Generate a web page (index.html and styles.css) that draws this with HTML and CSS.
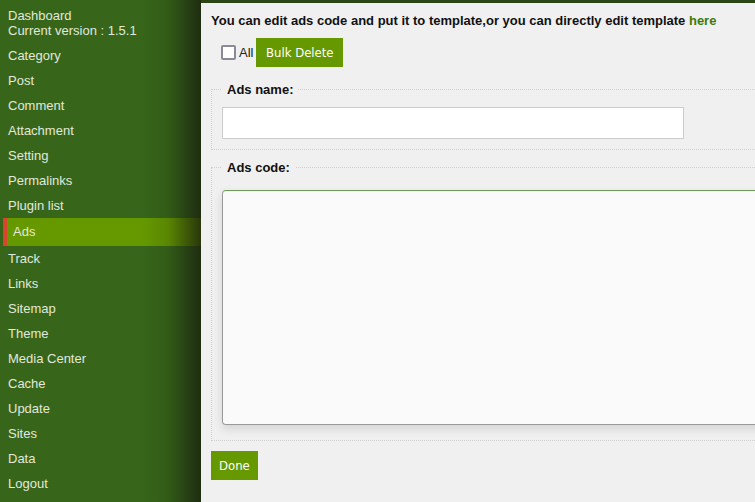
FILE: index.html
```html
<!DOCTYPE html>
<html>
<head>
<meta charset="utf-8">
<link rel="stylesheet" href="styles.css">
</head>
<body>
<div class="layout">
  <aside class="sidebar">
    <div class="head">
      <div>Dashboard</div>
      <div>Current version : 1.5.1</div>
    </div>
    <ul class="menu">
      <li>Category</li>
      <li>Post</li>
      <li>Comment</li>
      <li>Attachment</li>
      <li>Setting</li>
      <li>Permalinks</li>
      <li>Plugin list</li>
      <li class="active">Ads</li>
      <li>Track</li>
      <li>Links</li>
      <li>Sitemap</li>
      <li>Theme</li>
      <li>Media Center</li>
      <li>Cache</li>
      <li>Update</li>
      <li>Sites</li>
      <li>Data</li>
      <li>Logout</li>
    </ul>
  </aside>
  <main class="panel">
    <p class="intro">You can edit ads code and put it to template,or you can directly edit template <a href="#">here</a></p>
    <div class="bulk">
      <label class="all"><span class="box"></span>All</label>
      <button class="btn btn-bulk">Bulk Delete</button>
    </div>
    <fieldset class="fs fs-name">
      <legend>Ads name:</legend>
      <input class="name-input" type="text">
    </fieldset>
    <fieldset class="fs fs-code">
      <legend>Ads code:</legend>
      <textarea class="code"></textarea>
    </fieldset>
    <button class="btn btn-done">Done</button>
  </main>
</div>
</body>
</html>
```
FILE: styles.css
```css
html, body {
  margin: 0;
  padding: 0;
}
body {
  background: #2c4515;
  font-family: "Liberation Sans", Arial, sans-serif;
  font-size: 13px;
  width: 755px;
  height: 502px;
  overflow: hidden;
}
.layout {
  display: flex;
  height: 502px;
  overflow: hidden;
}
.sidebar {
  position: relative;
  flex: 0 0 201px;
  background: #37661a;
  color: #e2e8dc;
  padding-top: 8px;
  box-sizing: border-box;
}
.sidebar::after {
  content: "";
  position: absolute;
  top: 0;
  right: 0;
  bottom: 0;
  width: 60px;
  background: linear-gradient(to right, rgba(20,30,10,0) 0%, rgba(20,30,10,0.15) 45%, rgba(25,30,15,0.8) 100%);
  pointer-events: none;
}
.head {
  padding-left: 8px;
  line-height: 15px;
}
.menu {
  list-style: none;
  margin: 5px 0 0;
  padding: 0;
}
.menu li {
  height: 25px;
  line-height: 25px;
  padding-left: 8px;
}
.menu li.active {
  height: 28px;
  line-height: 28px;
  margin-left: 3px;
  border-left: 4px solid #d9442c;
  padding-left: 6px;
  background: #669900;
}
.panel {
  flex: 0 0 640px;
  margin-top: 3px;
  background: #f0f0f0;
  padding: 10px 0 0 10px;
  box-sizing: border-box;
  color: #111;
}
.intro {
  margin: 0;
  font-weight: bold;
  line-height: 15px;
}
.intro a {
  color: #3d7a0c;
  text-decoration: none;
}
.bulk {
  display: flex;
  align-items: center;
  margin-top: 10px;
  padding-left: 10px;
  height: 29px;
}
.all {
  display: flex;
  align-items: center;
  color: #222;
  margin-right: 3px;
}
.box {
  width: 11px;
  height: 11px;
  border: 2px solid #8a8a98;
  border-radius: 2px;
  background: #fff;
  margin-right: 3px;
}
.btn {
  border: 0;
  background: #669900;
  color: #fff;
  font-family: "DejaVu Sans Condensed", "DejaVu Sans", sans-serif;
  font-size: 13px;
  height: 29px;
  padding: 0 8px;
}
.btn-bulk {
  padding: 0 9.5px;
}
.fs {
  width: 600px;
  margin: 0;
  border: 1px dotted #cfcfcf;
  padding: 0 10px;
  box-sizing: border-box;
}
.fs legend {
  font-weight: bold;
  padding: 0 5px;
  line-height: 15px;
  color: #111;
}
.fs-name {
  margin-top: 15px;
  padding-bottom: 10px;
}
.name-input {
  display: block;
  margin-top: 10px;
  width: 462px;
  height: 32px;
  box-sizing: border-box;
  border: 1px solid #cccccc;
  background: #fff;
}
.fs-code {
  margin-top: 10px;
  padding-bottom: 15px;
}
.code {
  display: block;
  margin-top: 15px;
  width: 580px;
  height: 235px;
  box-sizing: border-box;
  border: 1px solid #999;
  border-top-color: #6a9f5a;
  border-radius: 4px;
  background: #fafafa;
  box-shadow: 0 4px 10px rgba(0,0,0,0.12);
  resize: none;
}
.btn-done {
  display: block;
  margin-top: 10px;
}
```
